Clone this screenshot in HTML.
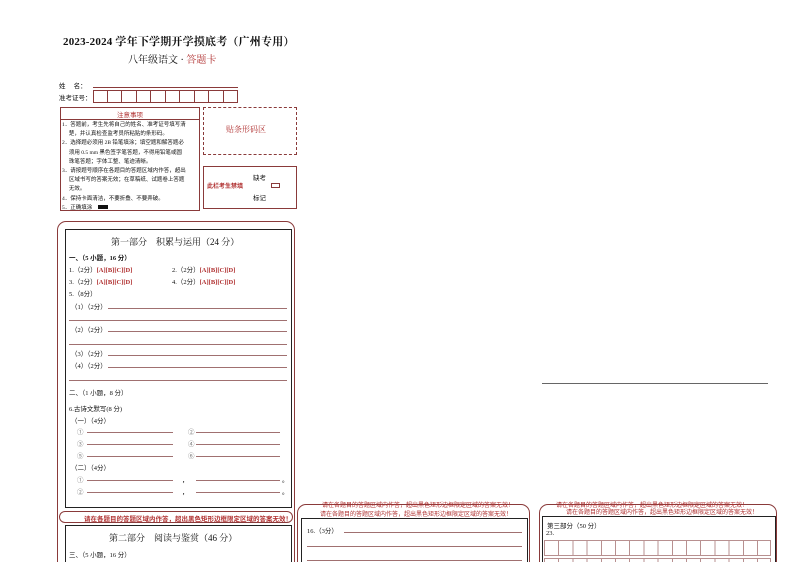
<!DOCTYPE html>
<html><head><meta charset="utf-8"><style>
html,body{margin:0;width:794px;height:562px;overflow:hidden}
body{background:#fff;position:relative;font-family:"Liberation Serif","Noto Serif CJK SC",serif;color:#111}
.a{position:absolute;white-space:nowrap}
.s{font-size:6.5px;font-family:"Liberation Serif","Noto Sans CJK SC",sans-serif}
.r{color:#b03030}
.ln{position:absolute;height:0;border-top:1px solid #a07070}
.b{position:absolute;border:1px solid #8a3a3a;box-sizing:border-box}
.k{position:absolute;border:1px solid #222;box-sizing:border-box}
</style></head><body>
<div class="a" style="left:63px;top:33px;font-size:11px;font-weight:bold;letter-spacing:0.2px">2023-2024 学年下学期开学摸底考（广州专用）</div>
<div class="a" style="left:128px;top:51px;font-size:10px">八年级语文 · <span class="r">答题卡</span></div>
<div class="a s" style="left:59px;top:80px">姓　 名：</div>
<div class="ln" style="left:93px;top:87px;width:145px;border-color:#8a3a3a"></div>
<div class="a s" style="left:59px;top:92px">准考证号：</div>
<div style="position:absolute;left:93px;top:90px;display:flex">
<div class="b" style="position:static;width:14.5px;height:13px"></div><div class="b" style="position:static;width:14.5px;height:13px;border-left:0"></div><div class="b" style="position:static;width:14.5px;height:13px;border-left:0"></div><div class="b" style="position:static;width:14.5px;height:13px;border-left:0"></div><div class="b" style="position:static;width:14.5px;height:13px;border-left:0"></div><div class="b" style="position:static;width:14.5px;height:13px;border-left:0"></div><div class="b" style="position:static;width:14.5px;height:13px;border-left:0"></div><div class="b" style="position:static;width:14.5px;height:13px;border-left:0"></div><div class="b" style="position:static;width:14.5px;height:13px;border-left:0"></div><div class="b" style="position:static;width:14.5px;height:13px;border-left:0"></div></div>
<div class="b" style="left:60px;top:107px;width:140px;height:104px"></div>
<div class="ln" style="left:60px;top:119px;width:140px;border-color:#8a3a3a"></div>
<div class="a s r" style="left:117px;top:109px">注意事项</div>
<div class="a s" style="left:62px;top:121px;line-height:9.2px;font-size:5.5px">1．答题前，考生先将自己的姓名、准考证号填写清<br>　 楚，并认真检查监考员所粘贴的条形码。<br>2．选择题必须用 2B 铅笔填涂；填空题和解答题必<br>　 须用 0.5 mm 黑色签字笔答题，不得用铅笔或圆<br>　 珠笔答题；字体工整、笔迹清晰。<br>3．请按题号顺序在各题目的答题区域内作答，超出<br>　 区域书写的答案无效；在草稿纸、试题卷上答题<br>　 无效。<br>4．保持卡面清洁，不要折叠、不要弄破。<br>5．正确填涂　<span style="display:inline-block;width:10px;height:4px;background:#111"></span></div>
<div class="b" style="left:203px;top:107px;width:94px;height:48px;border-style:dashed"></div>
<div class="a r" style="left:226px;top:124px;font-size:8px">贴条形码区</div>
<div class="b" style="left:203px;top:166px;width:94px;height:43px"></div>
<div class="a s" style="left:253px;top:172px">缺考</div>
<div class="a s r" style="left:207px;top:181px;font-size:6px;font-weight:bold">此栏考生禁填</div>
<div class="b" style="left:271px;top:183px;width:9px;height:5px"></div>
<div class="a s" style="left:253px;top:192px">标记</div>
<div class="ln" style="left:542px;top:383px;width:226px;border-color:#666"></div>

<div class="b" style="left:57px;top:221px;width:238px;height:360px;border-radius:9px"></div>
<div class="k" style="left:65px;top:229px;width:227px;height:279px;border-width:1.5px"></div>
<div class="a" style="left:111px;top:235px;font-size:9px">第一部分　积累与运用（24 分）</div>
<div class="a s" style="left:69px;top:252px;font-weight:bold">一、（5 小题，16 分）</div>
<div class="a s" style="left:69px;top:264px">1.（2分）<b class="r">[A][B][C][D]</b></div>
<div class="a s" style="left:172px;top:264px">2.（2分）<b class="r">[A][B][C][D]</b></div>
<div class="a s" style="left:69px;top:276px">3.（2分）<b class="r">[A][B][C][D]</b></div>
<div class="a s" style="left:172px;top:276px">4.（2分）<b class="r">[A][B][C][D]</b></div>
<div class="a s" style="left:69px;top:288px">5.（8分）</div>
<div class="a s" style="left:71px;top:301px">（1）（2分）</div><div class="ln" style="left:108px;top:308px;width:179px"></div>
<div class="ln" style="left:69px;top:320px;width:218px"></div>
<div class="a s" style="left:71px;top:324px">（2）（2分）</div><div class="ln" style="left:108px;top:331px;width:179px"></div>
<div class="ln" style="left:69px;top:344px;width:218px"></div>
<div class="a s" style="left:71px;top:348px">（3）（2分）</div><div class="ln" style="left:108px;top:355px;width:179px"></div>
<div class="a s" style="left:71px;top:360px">（4）（2分）</div><div class="ln" style="left:108px;top:367px;width:179px"></div>
<div class="ln" style="left:69px;top:380px;width:218px"></div>
<div class="a s" style="left:69px;top:387px">二、（1 小题，8 分）</div>
<div class="a s" style="left:69px;top:403px">6.古诗文默写(8 分)</div>
<div class="a s" style="left:71px;top:415px">（一）（4分）</div>
<div class="a s" style="left:77px;top:426px;color:#777">①</div><div class="ln" style="left:87px;top:432px;width:86px"></div>
<div class="a s" style="left:188px;top:426px;color:#777">②</div><div class="ln" style="left:196px;top:432px;width:84px"></div>
<div class="a s" style="left:77px;top:438px;color:#777">③</div><div class="ln" style="left:87px;top:444px;width:86px"></div>
<div class="a s" style="left:188px;top:438px;color:#777">④</div><div class="ln" style="left:196px;top:444px;width:84px"></div>
<div class="a s" style="left:77px;top:450px;color:#777">⑤</div><div class="ln" style="left:87px;top:456px;width:86px"></div>
<div class="a s" style="left:188px;top:450px;color:#777">⑥</div><div class="ln" style="left:196px;top:456px;width:84px"></div>
<div class="a s" style="left:71px;top:462px">（二）（4分）</div>
<div class="a s" style="left:77px;top:474px;color:#777">①</div><div class="ln" style="left:87px;top:480px;width:86px"></div><div class="a s" style="left:182px;top:474px">，</div><div class="ln" style="left:196px;top:480px;width:84px"></div><div class="a s" style="left:282px;top:474px">。</div>
<div class="a s" style="left:77px;top:486px;color:#777">②</div><div class="ln" style="left:87px;top:492px;width:86px"></div><div class="a s" style="left:182px;top:486px">，</div><div class="ln" style="left:196px;top:492px;width:84px"></div><div class="a s" style="left:282px;top:486px">。</div>
<div class="b" style="left:59px;top:511px;width:234px;height:12px;border-radius:6px"></div>
<div class="a s r" style="left:84px;top:513px;font-size:6.5px;font-weight:bold">请在各题目的答题区域内作答，超出黑色矩形边框限定区域的答案无效！</div>
<div class="k" style="left:65px;top:525px;width:227px;height:60px;border-width:1.5px"></div>
<div class="a" style="left:109px;top:531px;font-size:9px">第二部分　阅读与鉴赏（46 分）</div>
<div class="a s" style="left:69px;top:549px">三、（5 小题，16 分）</div>

<div class="b" style="left:297px;top:504px;width:233px;height:80px;border-radius:9px"></div>
<div class="a s r" style="left:322px;top:500px;font-size:6px">请在各题目的答题区域内作答，超出黑色矩形边框限定区域的答案无效！</div>
<div class="a s r" style="left:320px;top:509px;font-size:6px">请在各题目的答题区域内作答，超出黑色矩形边框限定区域的答案无效！</div>
<div class="k" style="left:301px;top:518px;width:227px;height:60px;border-width:1.5px"></div>
<div class="a s" style="left:307px;top:525px">16.（3分）</div><div class="ln" style="left:344px;top:532px;width:178px"></div>
<div class="ln" style="left:307px;top:546px;width:215px"></div>
<div class="ln" style="left:307px;top:560px;width:215px"></div>

<div class="b" style="left:539px;top:504px;width:238px;height:80px;border-radius:9px"></div>
<div class="a s r" style="left:556px;top:500px;font-size:6px">请在各题目的答题区域内作答，超出黑色矩形边框限定区域的答案无效！</div>
<div class="a s r" style="left:566px;top:507px;font-size:6px">请在各题目的答题区域内作答，超出黑色矩形边框限定区域的答案无效！</div>
<div class="k" style="left:542px;top:516px;width:234px;height:60px;border-width:1.5px"></div>
<div class="a s" style="left:547px;top:520px">第三部分（50 分）</div>
<div class="a s" style="left:546px;top:530px">23.</div>
<div style="position:absolute;left:544px;top:540px;width:227px;height:16px;border:1px solid #b89090;box-sizing:border-box;background:repeating-linear-gradient(90deg,transparent 0 13.2px,#b89090 13.2px 14.2px)"></div>
<div style="position:absolute;left:544px;top:558px;width:227px;height:16px;border:1px solid #b89090;box-sizing:border-box;background:repeating-linear-gradient(90deg,transparent 0 13.2px,#b89090 13.2px 14.2px)"></div>
</body></html>
